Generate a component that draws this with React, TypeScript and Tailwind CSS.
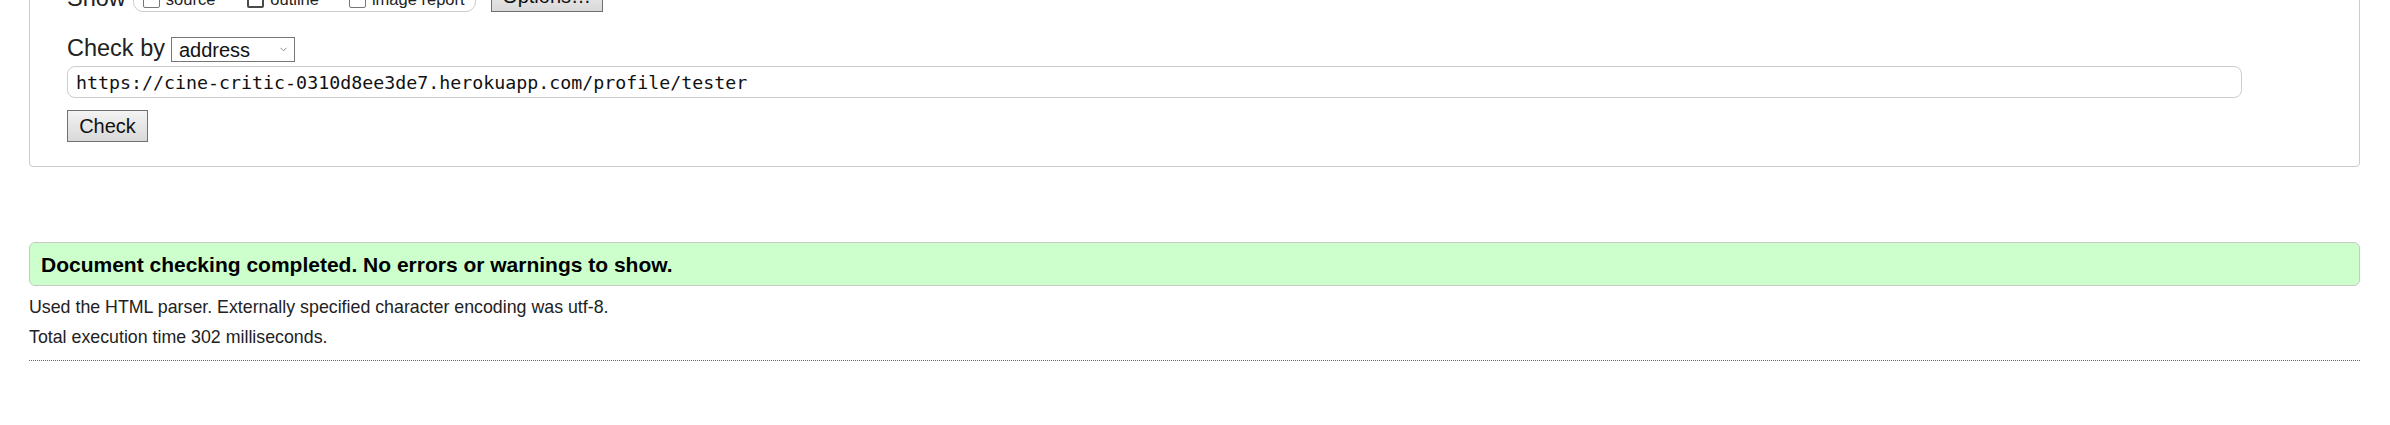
import React from "react";

const url = "https://cine-critic-0310d8ee3de7.herokuapp.com/profile/tester";

function Box({ label, strong }: { label: string; strong?: boolean }) {
  return (
    <label className="flex items-center gap-[6px] text-[16.5px] text-[#222] translate-y-[5px]">
      <span
        className={
          strong
            ? "w-[17px] h-[17px] rounded-[2px] border-2 border-[#4a4a4a] bg-white"
            : "w-[17px] h-[17px] rounded-[2px] border border-[#767676] bg-white"
        }
      />
      {label}
    </label>
  );
}

function Btn({ children, className = "" }: { children: React.ReactNode; className?: string }) {
  return (
    <button
      className={
        "h-[32px] border border-[#707070] bg-linear-to-b from-[#f3f3f3] to-[#d9d9d9] text-[20px] text-[#111] leading-none " +
        className
      }
    >
      {children}
    </button>
  );
}

export default function App() {
  return (
    <div className="w-[2390px] h-[425px] overflow-hidden bg-white text-[#222] font-['Liberation_Sans',Arial,sans-serif]">
      {/* page is scrolled down a bit, top of the form is off screen */}
      <div className="-mt-[40px] ml-[29px] w-[2331px] rounded-[4px] border border-[#cccccc] pt-[18px] pb-[24px] pl-[37px]">
        <div className="flex items-center h-[36px]">
          <span className="text-[23.5px] leading-none mt-[4px]">Show</span>
          <div className="ml-[7px] flex items-center h-[36px] rounded-[10px] border border-[#cccccc] pl-[9px] pr-[10px] mt-[-6px]">
            <Box label="source" />
            <div className="w-[32px]" />
            <Box label="outline" strong />
            <div className="w-[30px]" />
            <Box label="image report" />
          </div>
          <Btn className="ml-[15px] w-[112px] mt-[-2px]">Options…</Btn>
        </div>

        <div className="mt-[22px] flex items-center h-[25px]">
          <span className="text-[23.5px] leading-none -mt-[2px]">Check by</span>
          <div className="relative ml-[6px]">
            <select
              defaultValue="address"
              className="appearance-none block w-[124px] h-[25px] border border-[#767676] bg-white pl-[7px] text-[20px] leading-none text-[#111] outline-none"
            >
              <option value="address">address</option>
              <option value="file">file upload</option>
              <option value="text">text input</option>
            </select>
            <svg
              className="absolute right-[8px] top-[10px] pointer-events-none"
              width="7"
              height="5"
              viewBox="0 0 7 5"
              fill="none"
            >
              <path d="M0.5 0.8 L3.5 3.8 L6.5 0.8" stroke="#8a8a8a" strokeWidth="1" />
            </svg>
          </div>
        </div>

        <input
          readOnly
          value={url}
          className="mt-[4px] block w-[2175px] h-[32px] rounded-[8px] border border-[#cccccc] bg-white pl-[8px] text-[18.3px] text-[#111] font-['DejaVu_Sans_Mono','Liberation_Mono',monospace] outline-none"
        />

        <Btn className="mt-[12px] w-[81px]">Check</Btn>
      </div>

      <div className="mt-[75px] ml-[29px] w-[2331px] h-[44px] flex items-center rounded-[6px] border border-[#c8c8c8] bg-[#ccffcc] pl-[11px]">
        <p className="text-[21px] font-bold text-black leading-none">
          Document checking completed. No errors or warnings to show.
        </p>
      </div>

      <div className="ml-[29px] w-[2331px] mt-[6px] text-[17.8px] leading-[30px] text-[#222]">
        <p>Used the HTML parser. Externally specified character encoding was utf-8.</p>
        <p>Total execution time 302 milliseconds.</p>
        <div className="mt-[8px] border-t border-dotted border-[#666]" />
      </div>
    </div>
  );
}
